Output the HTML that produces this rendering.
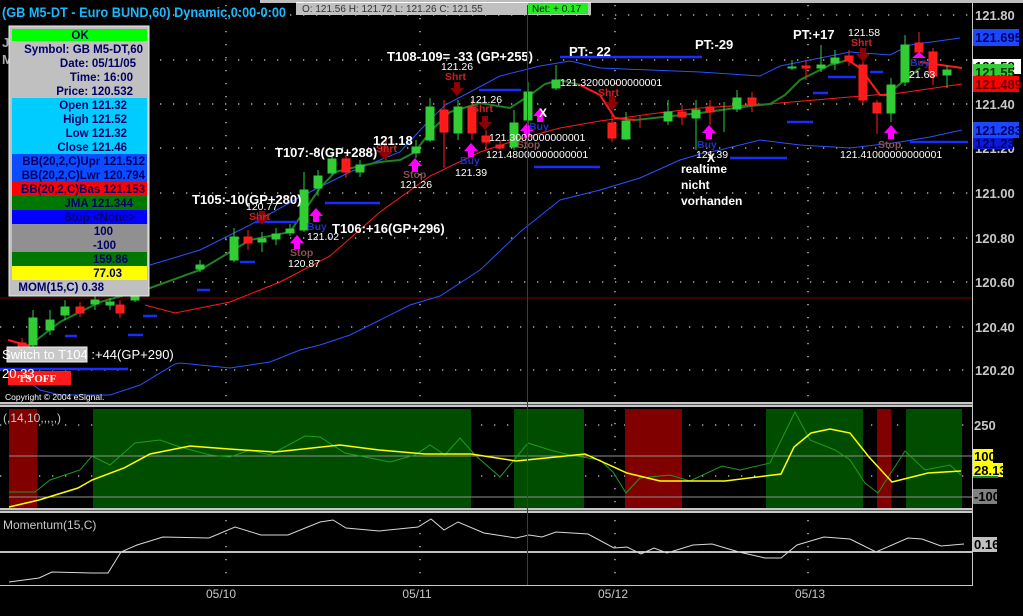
<!DOCTYPE html>
<html><head><meta charset="utf-8"><style>
html,body{margin:0;padding:0;background:#000;overflow:hidden}
svg{display:block;font-family:"Liberation Sans",Arial,sans-serif}
.ib text{font-size:11.5px;font-weight:bold;fill:#000066}
</style></head><body>
<svg width="1023" height="616" viewBox="0 0 1023 616" xmlns="http://www.w3.org/2000/svg">
<rect width="1023" height="616" fill="#000"/>
<rect x="0" y="0" width="1023" height="3" fill="#bdbdbd"/>
<rect x="0" y="0" width="260" height="3" fill="#000"/>
<line x1="972.5" y1="3" x2="972.5" y2="586" stroke="#c8c8c8" stroke-width="1"/>
<g stroke="#d0d0d0" stroke-width="1.3" stroke-dasharray="1.3 11.7">
<line x1="160" y1="15" x2="970" y2="15"/><line x1="160" y1="60" x2="970" y2="60"/>
<line x1="160" y1="104" x2="970" y2="104"/><line x1="160" y1="148" x2="970" y2="148"/>
<line x1="160" y1="193" x2="970" y2="193"/><line x1="160" y1="238" x2="970" y2="238"/>
<line x1="160" y1="282" x2="970" y2="282"/><line x1="0" y1="327" x2="970" y2="327"/>
<line x1="0" y1="370" x2="970" y2="370"/>
<line x1="226" y1="5" x2="226" y2="400"/><line x1="420" y1="5" x2="420" y2="400"/>
<line x1="615" y1="5" x2="615" y2="400"/><line x1="808" y1="5" x2="808" y2="400"/>
<line x1="0" y1="425" x2="970" y2="425"/><line x1="0" y1="476" x2="970" y2="476"/>
<line x1="226" y1="410" x2="226" y2="508"/><line x1="420" y1="410" x2="420" y2="508"/>
<line x1="615" y1="410" x2="615" y2="508"/><line x1="808" y1="410" x2="808" y2="508"/>
<line x1="226" y1="520" x2="226" y2="583"/><line x1="420" y1="520" x2="420" y2="583"/>
<line x1="615" y1="520" x2="615" y2="583"/><line x1="808" y1="520" x2="808" y2="583"/>
</g>
<line x1="0" y1="298" x2="972" y2="298" stroke="#7a0000" stroke-width="1"/>
<polyline fill="none" stroke="#2a50ff" stroke-width="1" points="150,265 200,250 250,225 300,197 350,172 400,152 425,125 445,105 470,92 500,76 540,66 570,61 600,68 650,70 700,72 760,76 780,66 800,62 850,52 890,55 910,45 960,38"/>
<polyline fill="none" stroke="#2a50ff" stroke-width="1" points="20,375 40,390 60,395 110,395 140,385 175,364 180,363 230,368 270,362 300,350 320,345 350,335 380,320 410,305 440,296 480,270 520,232 560,200 600,190 640,178 680,160 700,154 720,150 760,140 800,145 850,148 900,142 930,137 962,130"/>
<polyline fill="none" stroke="#ff1a1a" stroke-width="1" points="145,305 175,313 230,302 280,282 330,256 380,212 430,176 480,152 520,139 560,128 600,121 650,114 700,108 780,103 850,97 900,93 962,84"/>
<polyline fill="none" stroke="#ff1a1a" stroke-width="2" points="8,340 30,346"/>
<polyline fill="none" stroke="#208020" stroke-width="2" points="30,345 60,322 100,302 150,288 200,270 230,252 250,240 290,232 305,210 320,188 335,172 360,166 380,162 400,160 415,152 430,132 450,112 480,103 510,108 530,95 545,84 560,80 580,85"/>
<polyline fill="none" stroke="#ff1a1a" stroke-width="2" points="580,85 600,95 615,118 635,120"/>
<polyline fill="none" stroke="#208020" stroke-width="2" points="635,120 700,113 750,106 770,104 785,95 800,80 830,65 848,60"/>
<polyline fill="none" stroke="#ff1a1a" stroke-width="2" points="848,60 860,68 880,95 890,95"/>
<polyline fill="none" stroke="#208020" stroke-width="2" points="890,92 920,68"/>
<polyline fill="none" stroke="#ff1a1a" stroke-width="2" points="920,62 962,68"/>
<g stroke="#1a2cff" stroke-width="2.5">
<line x1="560" y1="57" x2="702" y2="57"/><line x1="479" y1="90" x2="521" y2="90"/>
<line x1="534" y1="167" x2="600" y2="167"/><line x1="325" y1="203" x2="380" y2="203"/>
<line x1="255" y1="222" x2="297" y2="222"/><line x1="240" y1="262" x2="255" y2="262"/>
<line x1="828" y1="77" x2="856" y2="77"/><line x1="813" y1="93" x2="828" y2="93"/>
<line x1="787" y1="122" x2="813" y2="122"/><line x1="730" y1="158" x2="787" y2="158"/>
<line x1="910" y1="142" x2="968" y2="142"/><line x1="870" y1="72" x2="883" y2="72"/>
<line x1="197" y1="290" x2="210" y2="290"/><line x1="143" y1="316" x2="157" y2="316"/>
<line x1="128" y1="335" x2="143" y2="335"/><line x1="65" y1="336" x2="77" y2="336"/>
<line x1="0" y1="369" x2="128" y2="369"/>
</g>
<g stroke-width="1">
<g stroke="#2ecc40" fill="#33cc33">
<line x1="33" y1="310" x2="33" y2="350"/><rect x="29" y="318" width="8" height="27"/>
<line x1="50" y1="310" x2="50" y2="335"/><rect x="46" y="320" width="8" height="10"/>
<line x1="65" y1="300" x2="65" y2="320"/><rect x="61" y="307" width="8" height="8"/>
<line x1="95" y1="296" x2="95" y2="310"/><rect x="91" y="300" width="8" height="4"/>
<line x1="110" y1="298" x2="110" y2="310"/><rect x="106" y="302" width="8" height="3"/>
<line x1="135" y1="275" x2="135" y2="302"/><rect x="131" y="280" width="8" height="20"/>
<line x1="200" y1="260" x2="200" y2="272"/><rect x="196" y="265" width="8" height="4"/>
<line x1="234" y1="228" x2="234" y2="262"/><rect x="230" y="237" width="8" height="23"/>
<line x1="262" y1="232" x2="262" y2="252"/><rect x="258" y="239" width="8" height="3"/>
<line x1="276" y1="228" x2="276" y2="245"/><rect x="272" y="234" width="8" height="5"/>
<line x1="290" y1="224" x2="290" y2="236"/><rect x="286" y="229" width="8" height="4"/>
<line x1="304" y1="172" x2="304" y2="232"/><rect x="300" y="190" width="8" height="40"/>
<line x1="318" y1="170" x2="318" y2="196"/><rect x="314" y="176" width="8" height="12"/>
<line x1="332" y1="153" x2="332" y2="175"/><rect x="328" y="159" width="8" height="14"/>
<line x1="360" y1="160" x2="360" y2="177"/><rect x="356" y="165" width="8" height="7"/>
<line x1="416" y1="140" x2="416" y2="158"/><rect x="412" y="147" width="8" height="6"/>
<line x1="430" y1="98" x2="430" y2="142"/><rect x="426" y="107" width="8" height="33"/>
<line x1="458" y1="100" x2="458" y2="140"/><rect x="454" y="107" width="8" height="26"/>
<line x1="514" y1="110" x2="514" y2="150"/><rect x="510" y="123" width="8" height="24"/>
<line x1="528" y1="82" x2="528" y2="125"/><rect x="524" y="92" width="8" height="28"/>
<line x1="556" y1="65" x2="556" y2="90"/><rect x="552" y="80" width="8" height="8"/>
<line x1="626" y1="112" x2="626" y2="140"/><rect x="622" y="121" width="8" height="18"/>
<line x1="668" y1="100" x2="668" y2="125"/><rect x="664" y="112" width="8" height="9"/>
<line x1="696" y1="100" x2="696" y2="150"/><rect x="692" y="110" width="8" height="8"/>
<line x1="724" y1="102" x2="724" y2="132"/>
<line x1="737" y1="90" x2="737" y2="112"/><rect x="733" y="98" width="8" height="11"/>
<line x1="821" y1="45" x2="821" y2="72"/><rect x="817" y="65" width="8" height="3"/>
<line x1="835" y1="50" x2="835" y2="70"/><rect x="831" y="58" width="8" height="5"/>
<line x1="891" y1="78" x2="891" y2="122"/><rect x="887" y="85" width="8" height="28"/>
<line x1="905" y1="35" x2="905" y2="86"/><rect x="901" y="45" width="8" height="37"/>
<line x1="947" y1="65" x2="947" y2="88"/><rect x="943" y="70" width="8" height="5"/>
<line x1="792" y1="60" x2="792" y2="70"/><rect x="788" y="67" width="8" height="1"/>
</g>
<g stroke="#ff2020" fill="#ff1a1a">
<line x1="22" y1="338" x2="22" y2="352"/><rect x="18" y="343" width="8" height="6"/>
<line x1="80" y1="302" x2="80" y2="317"/><rect x="76" y="307" width="8" height="6"/>
<line x1="120" y1="300" x2="120" y2="318"/><rect x="116" y="305" width="8" height="8"/>
<line x1="248" y1="230" x2="248" y2="250"/><rect x="244" y="237" width="8" height="6"/>
<line x1="346" y1="155" x2="346" y2="178"/><rect x="342" y="159" width="8" height="13"/>
<line x1="444" y1="100" x2="444" y2="168"/><rect x="440" y="110" width="8" height="22"/>
<line x1="472" y1="100" x2="472" y2="140"/><rect x="468" y="107" width="8" height="26"/>
<line x1="486" y1="130" x2="486" y2="150"/><rect x="482" y="136" width="8" height="6"/>
<line x1="500" y1="140" x2="500" y2="150"/><rect x="496" y="145" width="8" height="3"/>
<line x1="612" y1="115" x2="612" y2="142"/><rect x="608" y="123" width="8" height="15"/>
<line x1="640" y1="115" x2="640" y2="128"/>
<line x1="682" y1="105" x2="682" y2="125"/><rect x="678" y="112" width="8" height="5"/>
<line x1="710" y1="100" x2="710" y2="125"/><rect x="706" y="107" width="8" height="5"/>
<line x1="752" y1="92" x2="752" y2="112"/><rect x="748" y="98" width="8" height="7"/>
<line x1="806" y1="60" x2="806" y2="80"/><rect x="802" y="66" width="8" height="2"/>
<line x1="849" y1="50" x2="849" y2="66"/><rect x="845" y="56" width="8" height="5"/>
<line x1="863" y1="56" x2="863" y2="105"/><rect x="859" y="65" width="8" height="35"/>
<line x1="877" y1="100" x2="877" y2="134"/><rect x="873" y="103" width="8" height="10"/>
<line x1="919" y1="32" x2="919" y2="58"/><rect x="915" y="43" width="8" height="9"/>
<line x1="933" y1="48" x2="933" y2="85"/><rect x="929" y="52" width="8" height="24"/>
<line x1="386" y1="138" x2="386" y2="160"/>
</g>
</g>
<g fill="#ff00ff">
<path d="M316,208 l-7,8 h4 v6 h6 v-6 h4z"/><path d="M297,235 l-7,8 h4 v6 h6 v-6 h4z"/>
<path d="M415,158 l-7,8 h4 v6 h6 v-6 h4z"/><path d="M471,143 l-7,8 h4 v6 h6 v-6 h4z"/>
<path d="M527,123 l-7,8 h4 v6 h6 v-6 h4z"/><path d="M540,108 l-7,8 h4 v6 h6 v-6 h4z"/>
<path d="M709,125 l-7,8 h4 v6 h6 v-6 h4z"/><path d="M891,125 l-7,8 h4 v6 h6 v-6 h4z"/>
<path d="M919,52 l-7,6 h14z"/>
</g>
<g fill="#8b0000">
<path d="M262,225 l-7,-8 h4 v-6 h6 v6 h4z"/><path d="M385,160 l-7,-8 h4 v-6 h6 v6 h4z"/>
<path d="M457,96 l-7,-8 h4 v-6 h6 v6 h4z"/><path d="M485,130 l-7,-8 h4 v-6 h6 v6 h4z"/>
<path d="M612,110 l-7,-8 h4 v-6 h6 v6 h4z"/><path d="M863,62 l-7,-8 h4 v-6 h6 v6 h4z"/>
</g>
<g font-size="10.5" font-weight="bold">
<text x="249" y="220" fill="#cc2222">Shrt</text><text x="445" y="80" fill="#cc2222">Shrt</text>
<text x="472" y="112" fill="#cc2222">Shrt</text><text x="598" y="96" fill="#cc2222">Shrt</text>
<text x="376" y="152" fill="#cc2222">Shrt</text><text x="851" y="46" fill="#cc2222">Shrt</text>
<text x="290" y="256" fill="#8a5050">Stop</text><text x="403" y="178" fill="#8a5050">Stop</text>
<text x="878" y="148" fill="#8a5050">Stop</text><text x="517" y="148" fill="#8a5050">Stop</text>
<text x="307" y="230" fill="#2030c0">Buy</text><text x="460" y="164" fill="#2030c0">Buy</text>
<text x="529" y="130" fill="#2030c0">Buy</text><text x="697" y="148" fill="#2030c0">Buy</text>
<text x="910" y="66" fill="#2030c0">Buy</text>
</g>
<g font-size="10.5" fill="#fff">
<text x="246" y="210">120.77</text><text x="307" y="240">121.02</text><text x="288" y="267">120.87</text>
<text x="400" y="188">121.26</text><text x="455" y="176">121.39</text><text x="441" y="70">121.26</text>
<text x="470" y="103">121.26</text><text x="489" y="141">121.3000000000001</text>
<text x="486" y="158">121.48000000000001</text><text x="560" y="86">121.32000000000001</text>
<text x="696" y="158">121.39</text><text x="840" y="158">121.41000000000001</text>
<text x="848" y="36">121.58</text><text x="909" y="78">21.63</text>
</g>
<g font-size="13" font-weight="bold" fill="#fff">
<text x="387" y="61">T108-109=  -33 (GP+255)</text>
<text x="569" y="56">PT:- 22</text><text x="695" y="49">PT:-29</text><text x="793" y="39">PT:+17</text>
<text x="275" y="157">T107:-8(GP+288)</text><text x="373" y="145">121.18</text>
<text x="192" y="204">T105:-10(GP+280)</text><text x="332" y="233">T106:+16(GP+296)</text>
<text x="681" y="173" font-size="12">realtime</text><text x="681" y="189" font-size="12">nicht</text><text x="681" y="205" font-size="12">vorhanden</text>
<text x="539" y="117" font-size="12">X</text><text x="707" y="162" font-size="12">X</text>
</g>
<text x="2" y="17" font-size="14" font-weight="bold" fill="#1ab8ff" textLength="284" lengthAdjust="spacingAndGlyphs">(GB M5-DT - Euro BUND,60) Dynamic,0:00-0:00</text>
<rect x="296" y="2" width="295" height="13" fill="#c0c0c0"/>
<rect x="296" y="2" width="295" height="1" fill="#fff"/>
<text x="302" y="12" font-size="10" fill="#333">O: 121.56    H: 121.72    L: 121.26    C: 121.55</text>
<rect x="528" y="3" width="60" height="11" fill="#22ee22"/>
<text x="532" y="12" font-size="10" fill="#111">Net: + 0.17</text>
<text x="2" y="47" font-size="13" font-weight="bold" fill="#aaa">J</text>
<text x="2" y="64" font-size="13" font-weight="bold" fill="#aaa">M</text>
<g class="ib">
<rect x="9" y="26" width="140" height="270" fill="#c0c0c0" stroke="#eee" stroke-width="1"/>
<rect x="12" y="29" width="135" height="12" fill="#00ff00"/>
<rect x="12" y="98" width="135" height="56" fill="#00ccff"/>
<rect x="12" y="154" width="135" height="28" fill="#0a4cff"/>
<rect x="12" y="182" width="135" height="14" fill="#ff0000"/>
<rect x="12" y="196" width="135" height="14" fill="#007700"/>
<rect x="12" y="210" width="135" height="14" fill="#0000ff"/>
<rect x="12" y="224" width="135" height="28" fill="#909090"/>
<rect x="12" y="252" width="135" height="14" fill="#007700"/>
<rect x="12" y="266" width="135" height="14" fill="#ffff00"/>
<text x="80" y="39" text-anchor="middle" fill="#003300">OK</text>
<text x="143" y="53" text-anchor="end">Symbol: GB M5-DT,60</text>
<text x="136" y="67" text-anchor="end">Date: 05/11/05</text>
<text x="133" y="81" text-anchor="end">Time: 16:00</text>
<text x="133" y="95" text-anchor="end">Price: 120.532</text>
<text x="127" y="109" text-anchor="end">Open 121.32</text>
<text x="127" y="123" text-anchor="end">High 121.52</text>
<text x="127" y="137" text-anchor="end">Low 121.32</text>
<text x="127" y="151" text-anchor="end">Close 121.46</text>
<text x="145" y="165" text-anchor="end">BB(20,2,C)Upr 121.512</text>
<text x="145" y="179" text-anchor="end">BB(20,2,C)Lwr 120.794</text>
<text x="145" y="193" text-anchor="end">BB(20,2,C)Bas 121.153</text>
<text x="133" y="207" text-anchor="end">JMA 121.344</text>
<text x="135" y="221" text-anchor="end" fill="#0000aa">Stop &lt;None&gt;</text>
<text x="113" y="235" text-anchor="end" fill="#003300">100</text>
<text x="116" y="249" text-anchor="end">-100</text>
<text x="128" y="263" text-anchor="end">159.86</text>
<text x="122" y="277" text-anchor="end">77.03</text>
<text x="104" y="291" text-anchor="end">MOM(15,C) 0.38</text>
</g>
<rect x="7" y="347" width="80" height="15" fill="#c8c8c8" stroke="#eee"/>
<text x="2" y="359" font-size="13" fill="#fff">Switch to T104 :+44(GP+290)</text>
<rect x="8" y="371" width="63" height="14" fill="#ff1a1a"/>
<text x="18" y="382" font-size="11" font-weight="bold" fill="#fff" font-family="Liberation Serif,serif">TS OFF</text>
<text x="2" y="378" font-size="13" fill="#fff">20.33</text>
<text x="5" y="400" font-size="8.5" fill="#fff">Copyright © 2004 eSignal.</text>
<g font-size="13" font-weight="bold" fill="#c8c8c8">
<text x="975" y="20">121.80</text>
<rect x="973" y="29" width="46" height="17" fill="#1a48ff"/><text x="975" y="42" fill="#000066">121.695</text>
<rect x="973" y="59" width="48" height="15" fill="#fff"/><text x="975" y="71" fill="#000">121.58</text>
<rect x="973" y="64" width="40" height="16" fill="#33cc33"/><text x="975" y="77" fill="#003300">121.55</text>
<rect x="973" y="76" width="46" height="16" fill="#ff0000"/><text x="975" y="89" fill="#660000">121.489</text>
<text x="975" y="109">121.40</text>
<text x="975" y="153">121.20</text>
<rect x="973" y="122" width="46" height="16" fill="#1a48ff"/><text x="975" y="135" fill="#000066">121.283</text>
<rect x="973" y="138" width="40" height="11" fill="#0a1ad8"/><text x="975" y="148" fill="#000066">121.23</text>
<text x="975" y="198">121.00</text><text x="975" y="243">120.80</text><text x="975" y="287">120.60</text>
<text x="975" y="332">120.40</text><text x="975" y="375">120.20</text>
</g>
<rect x="0" y="402" width="972" height="5" fill="#c8c8c8"/><rect x="0" y="404" width="972" height="1" fill="#555"/>
<rect x="0" y="508" width="972" height="5" fill="#c8c8c8"/><rect x="0" y="510" width="972" height="1" fill="#555"/>
<g>
<rect x="9" y="409" width="28" height="99" fill="#800000"/>
<rect x="93" y="409" width="378" height="99" fill="#004d00"/>
<rect x="514" y="409" width="70" height="99" fill="#004d00"/>
<rect x="625" y="409" width="57" height="99" fill="#800000"/>
<rect x="766" y="409" width="97" height="99" fill="#004d00"/>
<rect x="877" y="409" width="14" height="99" fill="#800000"/>
<rect x="906" y="409" width="56" height="99" fill="#004d00"/>
</g>
<line x1="9" y1="456" x2="972" y2="456" stroke="#909090"/>
<line x1="9" y1="497" x2="972" y2="497" stroke="#909090"/>
<polyline fill="none" stroke="#1f9a1f" stroke-width="1" points="9,492 35,492 50,480 80,470 92,456 110,465 135,443 160,440 180,447 210,455 230,457 250,450 270,455 305,436 320,437 345,453 390,462 415,455 430,445 445,455 460,438 475,455 500,477 528,443 550,450 570,455 600,460 613,472 626,493 640,478 670,475 690,481 722,466 740,470 770,463 795,412 810,440 835,450 850,460 865,483 878,493 905,451 925,470 950,465 961,475"/>
<polyline fill="none" stroke="#ffff00" stroke-width="1.5" points="9,507 39,500 78,488 92,480 124,468 150,454 190,446 229,449 275,452 340,445 379,450 425,454 471,454 516,461 556,457 585,454 627,473 660,481 725,481 781,474 794,447 811,433 830,429 850,433 869,457 892,482 928,473 961,471"/>
<text x="3" y="422" font-size="12" fill="#c8c8c8">(,14,10,,,,,)</text>
<g font-size="13" font-weight="bold">
<text x="974" y="430" fill="#c8c8c8">250</text>
<rect x="973" y="449" width="20" height="14" fill="#ffff00"/><text x="974" y="461" fill="#000">100</text>
<rect x="973" y="463" width="30" height="14" fill="#ffff00"/><rect x="973" y="476" width="25" height="2" fill="#1a8a1a"/><text x="974" y="475" fill="#000">28.13</text>
<rect x="973" y="489" width="24" height="15" fill="#808080"/><text x="974" y="501" fill="#000">-100</text>
<rect x="973" y="537" width="24" height="15" fill="#c0c0c0"/><text x="974" y="549" fill="#000">0.16</text>
</g>
<line x1="0" y1="552" x2="972" y2="552" stroke="#fff" stroke-width="1.5"/>
<polyline fill="none" stroke="#d8d8d8" stroke-width="1" points="9,582 39,578 52,572 92,573 108,573 121,552 137,545 163,537 209,538 235,527 261,535 288,535 320,522 333,520 346,528 379,531 418,527 431,519 444,530 458,522 484,533 516,538 529,535 542,537 556,532 588,534 614,548 627,547 641,554 654,548 667,553 693,545 712,544 739,552 765,558 781,558 797,545 824,537 850,539 876,552 908,538 922,539 941,546 964,544"/>
<text x="3" y="529" font-size="12" fill="#c8c8c8">Momentum(15,C)</text>
<line x1="0" y1="585.5" x2="972" y2="585.5" stroke="#c8c8c8"/>
<line x1="527.5" y1="5" x2="527.5" y2="585" stroke="#a01010" stroke-width="1"/>
<g font-size="12" fill="#c8c8c8" text-anchor="middle">
<text x="221" y="598">05/10</text><text x="417" y="598">05/11</text><text x="613" y="598">05/12</text><text x="810" y="598">05/13</text>
</g>
</svg>
</body></html>
